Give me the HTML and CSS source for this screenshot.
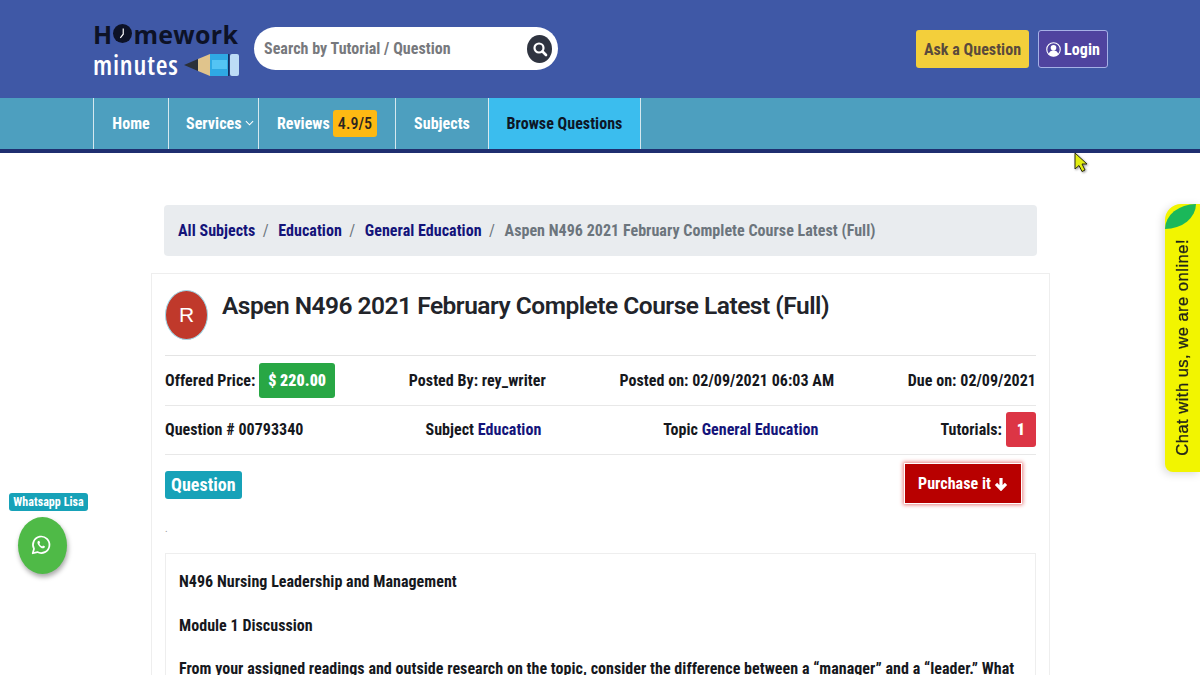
FILE: index.html
```html
<!DOCTYPE html>
<html lang="en">
<head>
    <meta charset="UTF-8">
    <meta name="viewport" content="width=device-width, initial-scale=1.0">
    <title>Aspen N496 2021 February Complete Course Latest (Full)</title>
    <link rel="stylesheet" href="styles.css">
</head>
<body>
    <header class="topbar">
        <div class="logo">
            <div class="logo-top">H<svg class="logo-clock" viewBox="0 0 26 26"><circle cx="13" cy="13" r="13" fill="#0d1226"/><path d="M14 6v8l-4 5" fill="none" stroke="#fff" stroke-width="1.6"/></svg>mework</div>
            <div class="logo-bottom">
                <span>minutes</span>
                <svg class="logo-pencil" viewBox="0 0 56 24">
                    <path d="M0 12 14 6v12z" fill="#2b3038"/>
                    <path d="M14 6 26 1v22l-12-5z" fill="#e0c48c"/>
                    <rect x="26" y="1" width="18" height="22" fill="#2fa9e4"/>
                    <rect x="28" y="7" width="15" height="9" fill="#54c4f4"/>
                    <rect x="44" y="1" width="1.5" height="22" fill="#12305e"/>
                    <rect x="46" y="1" width="9" height="22" rx="2" fill="#bcdcf6"/>
                </svg>
            </div>
        </div>
        <form class="search">
            <span class="search-text">Search by Tutorial / Question</span>
            <span class="search-btn">
                <svg viewBox="0 0 16 16" width="16" height="16"><circle cx="7" cy="7" r="4.5" fill="none" stroke="#fff" stroke-width="2.2"/><path d="M10.5 10.5 14 14" stroke="#fff" stroke-width="2.6" stroke-linecap="round"/></svg>
            </span>
        </form>
        <div class="top-actions">
            <a class="btn-ask">Ask a Question</a>
            <a class="btn-login">
                <svg viewBox="0 0 16 16" width="15" height="15"><circle cx="8" cy="8" r="7.2" fill="none" stroke="#fff" stroke-width="1.2"/><circle cx="8" cy="6.2" r="3" fill="#fff"/><path d="M2.8 13c.8-3 2.6-4 5.2-4s4.400 1 5.200 4a7 7 0 0 1-10.400 0z" fill="#fff"/></svg>
                Login
            </a>
        </div>
    </header>

    <nav class="mainnav">
        <a class="nav-item nav-home">Home</a>
        <a class="nav-item nav-services">Services<svg viewBox="0 0 10 6" width="9" height="6"><path d="M1 1l4 4 4-4" fill="none" stroke="#fff" stroke-width="1.2"/></svg></a>
        <a class="nav-item nav-reviews">Reviews <span class="rating">4.9/5</span></a>
        <a class="nav-item nav-subjects">Subjects</a>
        <a class="nav-item nav-browse">Browse Questions</a>
    </nav>

    <main class="page">
        <ol class="breadcrumb">
            <li><a>All Subjects</a></li>
            <li><a>Education</a></li>
            <li><a>General Education</a></li>
            <li class="current">Aspen N496 2021 February Complete Course Latest (Full)</li>
        </ol>

        <section class="card">
            <div class="title-row">
                <div class="avatar">R</div>
                <h1>Aspen N496 2021 February Complete Course Latest (Full)</h1>
            </div>

            <div class="info-row">
                <span>Offered Price: <b class="price">$ 220.00</b></span>
                <span>Posted By: rey_writer</span>
                <span>Posted on: 02/09/2021 06:03 AM</span>
                <span>Due on: 02/09/2021</span>
            </div>
            <div class="info-row">
                <span>Question # 00793340</span>
                <span>Subject <a>Education</a></span>
                <span>Topic <a>General Education</a></span>
                <span>Tutorials: <b class="count">1</b></span>
            </div>

            <div class="question-row">
                <span class="question-tag">Question</span>
                <a class="btn-purchase">Purchase it
                    <svg viewBox="0 0 14 14" width="14" height="14"><path d="M7 1v10.500M2 6.800 7 12l5-5.200" fill="none" stroke="#fff" stroke-width="3.200"/></svg>
                </a>
            </div>
            <div class="dot">.</div>

            <div class="question-body">
                <p>N496 Nursing Leadership and Management</p>
                <p>Module 1 Discussion</p>
                <p>From your assigned readings and outside research on the topic, consider the difference between a “manager” and a “leader.” What</p>
            </div>
        </section>
    </main>

    <div class="whatsapp">
        <span class="whatsapp-label">Whatsapp Lisa</span>
        <span class="whatsapp-btn">
            <svg viewBox="0 0 24 24" width="22" height="22"><path d="M3 21l1.400-4.800A9 9 0 1 1 8 19.700z" fill="none" stroke="#fff" stroke-width="1.900" stroke-linejoin="round"/><path d="M8.800 7.500c-1 1-1 2.600.5 4.700 1.500 2.100 3.600 3.700 5.400 3.400 1-.2 1.700-1 1.700-1.900l-2.200-1.100-.9 1c-1.200-.4-2.500-1.700-3-3l.8-1-1-2.200z" fill="#fff"/></svg>
        </span>
    </div>

    <div class="chat-tab">
        <span class="chat-leaf"></span>
        <span class="chat-text">Chat with us, we are online!</span>
    </div>

    <svg class="cursor" viewBox="0 0 14 22" width="14" height="22"><path d="M1 1v16l4-3.500 3 6 3-1.500-3-6h5z" fill="#e2ee10" stroke="#2a2a10" stroke-width="1"/></svg>
</body>
</html>
```

FILE: styles.css
```css
* {
    box-sizing: border-box;
}
html, body {
    height: 675px;
    overflow: hidden;
}
body {
    margin: 0;
    background: white;
    font-family: Roboto, 'Liberation Sans', sans-serif;
    font-size: 16px;
    font-weight: 700;
    font-stretch: 85%;
    color: #16181d;
    letter-spacing: 0.04px;
}
a {
    text-decoration: none;
}

/* header */
.topbar {
    height: 98px;
    background: #3f58a6;
    display: flex;
    align-items: center;
    padding: 0 92px 0 93px;
}
.logo {
    width: 160px;
    margin-right: 1px;
    flex: none;
}
.logo-top {
    display: flex;
    align-items: center;
    height: 30px;
    padding-bottom: 2px;
    font-family: 'Open Sans', sans-serif;
    font-size: 25px;
    line-height: 26px;
    font-stretch: normal;
    font-weight: 700;
    color: #0d1226;
    letter-spacing: 0.3px;
}
.logo-clock {
    width: 19px;
    height: 19px;
    margin: 0 1px;
}
.logo-bottom {
    display: flex;
    align-items: center;
    justify-content: space-between;
    height: 29px;
    padding-top: 1px;
    width: 147px;
    font-family: 'Open Sans', sans-serif;
    font-size: 27px;
    line-height: 26px;
    font-stretch: 80%;
    font-weight: 600;
    color: white;
    letter-spacing: 0.8px;
}
.logo-pencil {
    width: 56px;
    height: 24px;
    flex: none;
}
.search {
    width: 304px;
    height: 43px;
    margin-bottom: 1px;
    background: white;
    border-radius: 22px;
    display: flex;
    align-items: center;
    justify-content: space-between;
    padding: 0 6px 0 10px;
}
.search-text {
    color: #77797d;
}
.search-btn {
    width: 25px;
    height: 28px;
    border-radius: 50%;
    background: #2f3440;
    display: flex;
    align-items: center;
    justify-content: center;
}
.top-actions {
    margin-left: auto;
    display: flex;
    gap: 9px;
}
.btn-ask {
    height: 38px;
    width: 113px;
    background: #f3cf3b;
    color: #5a4a3c;
    border-radius: 3px;
    display: flex;
    align-items: center;
    justify-content: center;
}
.btn-login {
    height: 38px;
    width: 70px;
    background: #4f439f;
    color: white;
    border: 1px solid #a6b0e6;
    border-radius: 3px;
    display: flex;
    align-items: center;
    justify-content: center;
    gap: 3px;
}

/* nav */
.mainnav {
    height: 55px;
    background: #4d9fbf;
    border-bottom: 4px solid #1f2f70;
    display: flex;
    padding-left: 93px;
}
.nav-item {
    border-left: 1px solid #d5e8ef;
    color: white;
    display: flex;
    align-items: center;
    justify-content: center;
    gap: 3px;
    padding-bottom: 1px;
}
.nav-home { width: 75px; }
.nav-services {
    width: 90px;
    justify-content: flex-start;
    padding-left: 17px;
}
.nav-reviews { width: 137px; }
.nav-subjects { width: 93px; }
.nav-browse {
    width: 153px;
    background: #3bbdee;
    color: #0d1626;
    border-right: 1px solid #d5e8ef;
}
.rating {
    background: #fdb913;
    color: #2a2420;
    font-weight: 500;
    border-radius: 3px;
    padding: 5px 5px;
    line-height: 17px;
}

/* content */
.page {
    width: 899px;
    margin: 52px 0 0 151px;
}
.breadcrumb {
    list-style: none;
    margin: 0 13px 17px;
    padding: 0 14px;
    height: 51px;
    background: #e9ecef;
    border-radius: 4px;
    display: flex;
    align-items: center;
}
.breadcrumb a {
    color: #14147a;
}
.breadcrumb li + li::before {
    content: "/";
    color: #6c757d;
    font-weight: 400;
    padding: 0 9.500px 0 7.500px;
}
.breadcrumb .current {
    color: #6c757d;
}
.card {
    border: 1px solid #eeeeee;
    border-bottom: 0;
    padding: 0 13px;
}
.title-row {
    height: 82px;
    display: flex;
    align-items: flex-start;
    gap: 14px;
    padding-top: 16px;
    border-bottom: 1px solid #e4e4e4;
}
.avatar {
    width: 43px;
    height: 50px;
    border-radius: 50%;
    background: #c0392b;
    border: 1px solid #9fd8e8;
    color: white;
    font-family: 'Liberation Sans', sans-serif;
    font-size: 21px;
    font-weight: 400;
    font-stretch: normal;
    display: flex;
    align-items: center;
    justify-content: center;
}
h1 {
    margin: 0;
    font-size: 24.500px;
    font-weight: 600;
    font-stretch: normal;
    line-height: 31px;
    letter-spacing: -0.5px;
    color: #22242a;
}
.info-row {
    height: 49.500px;
    display: flex;
    align-items: center;
    justify-content: space-between;
    border-bottom: 1px solid #e8e8e8;
}
.info-row a {
    color: #14147a;
}
.price {
    display: inline-block;
    background: #28a745;
    color: white;
    border-radius: 3px;
    padding: 8px 9px;
    line-height: 19px;
    margin-left: 0;
}
.count {
    display: inline-block;
    background: #dc3545;
    color: white;
    border-radius: 3px;
    padding: 8px 11px;
    line-height: 19px;
}
.question-row {
    display: flex;
    align-items: flex-start;
    justify-content: space-between;
    padding: 8px 14px 0 0;
    height: 68px;
}
.question-tag {
    margin-top: 8px;
    background: #17a2b8;
    color: white;
    font-size: 18px;
    line-height: 20px;
    padding: 4px 6px;
    border-radius: 3px;
}
.btn-purchase {
    width: 118px;
    height: 41px;
    background: #b80000;
    color: white;
    box-shadow: 0 0 4px 1px #e98080;
    border: 1px solid white;
    display: flex;
    align-items: center;
    justify-content: center;
    gap: 3px;
}
.dot {
    color: #999;
    font-size: 10px;
    font-weight: 400;
    line-height: 12px;
    height: 30px;
}
.question-body {
    border: 1px solid #eeeeee;
    padding: 18px 13px;
}
.question-body p {
    margin: 0 0 24.500px;
    line-height: 19px;
}

/* floating things */
.whatsapp {
    position: fixed;
    left: 9px;
    top: 493px;
    width: 79px;
    display: flex;
    flex-direction: column;
    align-items: flex-start;
    gap: 6px;
}
.whatsapp-label {
    width: 79px;
    height: 18px;
    background: #17a2b8;
    color: white;
    font-size: 12px;
    line-height: 18px;
    text-align: center;
    border-radius: 3px;
}
.whatsapp-btn {
    margin-left: 9px;
    width: 49px;
    height: 57px;
    border-radius: 50%;
    background: #4fba47;
    box-shadow: 1px 3px 5px rgba(0,0,0,0.35);
    display: flex;
    align-items: center;
    justify-content: center;
    padding: 0 3px 2px 0;
}
.chat-tab {
    position: fixed;
    left: 1165px;
    top: 204px;
    width: 35px;
    height: 268px;
    background: #f2f500;
    border-radius: 16px 0 0 8px;
    box-shadow: -2px 2px 8px rgba(0,0,0,0.15);
    overflow: hidden;
}
.chat-leaf {
    position: absolute;
    left: 0;
    top: 0;
    width: 31px;
    height: 25px;
    background: #1bb85a;
    border-radius: 100% 0 100% 0;
}
.chat-text {
    position: absolute;
    left: 7px;
    bottom: 16px;
    writing-mode: vertical-rl;
    transform: rotate(180deg);
    font-family: 'Liberation Sans', sans-serif;
    font-size: 16.500px;
    font-weight: 400;
    font-stretch: normal;
    letter-spacing: 0.5px;
    color: #22241a;
    -webkit-text-stroke: 0.3px #22241a;
    line-height: 20px;
}
.cursor {
    position: fixed;
    left: 1074px;
    top: 152px;
    filter: drop-shadow(1px 1px 1px rgba(0,0,0,0.4));
}
```
